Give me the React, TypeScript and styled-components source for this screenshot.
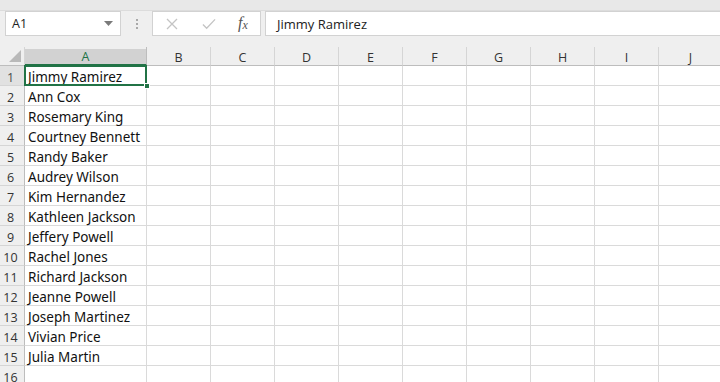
import React from 'react';
import styled, { createGlobalStyle } from 'styled-components';

const names = [
    'Jimmy Ramirez',
    'Ann Cox',
    'Rosemary King',
    'Courtney Bennett',
    'Randy Baker',
    'Audrey Wilson',
    'Kim Hernandez',
    'Kathleen Jackson',
    'Jeffery Powell',
    'Rachel Jones',
    'Richard Jackson',
    'Jeanne Powell',
    'Joseph Martinez',
    'Vivian Price',
    'Julia Martin',
    '',
    '',
];

const columns = ['A', 'B', 'C', 'D', 'E', 'F', 'G', 'H', 'I', 'J'];

const GlobalStyle = createGlobalStyle`
    *, *::before, *::after {
        box-sizing: border-box;
    }
    html, body {
        margin: 0;
        padding: 0;
        background: #ffffff;
        overflow: hidden;
    }
    body {
        font-family: 'Noto Sans', 'Open Sans', sans-serif;
    }
`;

export default function App() {
    return (
        <Page>
            <GlobalStyle />
            <FormulaBar>
                <NameBox>
                    <span>A1</span>
                    <svg width="9" height="5" viewBox="0 0 9 5">
                        <path d="M0 0 H9 L4.5 5 Z" fill="#7a7a7a" />
                    </svg>
                </NameBox>
                <Grip>
                    <i />
                    <i />
                    <i />
                </Grip>
                <ButtonBox>
                    <IconButton>
                        <svg width="12" height="12" viewBox="0 0 12 12">
                            <path d="M1 1 L11 11 M11 1 L1 11" stroke="#c4c4c4" strokeWidth="1.3" fill="none" />
                        </svg>
                    </IconButton>
                    <IconButton>
                        <svg width="15" height="12" viewBox="0 0 15 12">
                            <path d="M1 6.5 L5 10.5 L14 1" stroke="#c4c4c4" strokeWidth="1.4" fill="none" />
                        </svg>
                    </IconButton>
                    <FxLabel>
                        f<sub>x</sub>
                    </FxLabel>
                </ButtonBox>
                <FormulaInput>Jimmy Ramirez</FormulaInput>
            </FormulaBar>
            <Sheet>
                <Corner>
                    <svg width="12" height="12" viewBox="0 0 12 12">
                        <path d="M12 0 V12 H0 Z" fill="#b9b9b9" />
                    </svg>
                </Corner>
                {columns.map((c, i) => (
                    <ColHeader key={c} $active={i === 0}>
                        {c}
                    </ColHeader>
                ))}
                {names.map((name, r) => (
                    <React.Fragment key={r}>
                        <RowHeader $active={r === 0}>{r + 1}</RowHeader>
                        {columns.map((c, i) => (
                            <Cell key={c} $selected={r === 0 && i === 0}>
                                {i === 0 ? name : ''}
                            </Cell>
                        ))}
                    </React.Fragment>
                ))}
            </Sheet>
        </Page>
    );
}

const Page = styled.div`
    width: 720px;
    height: 382px;
    overflow: hidden;
    background: #ffffff;
`;

const FormulaBar = styled.div`
    display: flex;
    align-items: stretch;
    height: 47px;
    padding: 11px 0 11px 5px;
    background: #efefef;
    box-shadow: inset 0 10px 0 #e8e8e8, inset 0 11px 0 #dcdcdc;
`;

const NameBox = styled.div`
    display: flex;
    align-items: center;
    justify-content: space-between;
    width: 116px;
    padding: 0 7px 0 6px;
    background: #ffffff;
    border: 1px solid #d2d2d2;
    font-family: 'Open Sans', 'Noto Sans', sans-serif;
    font-size: 12.5px;
    color: #222;
`;

const Grip = styled.div`
    display: flex;
    flex-direction: column;
    justify-content: center;
    align-items: center;
    gap: 2px;
    width: 31px;

    i {
        display: block;
        width: 2px;
        height: 2px;
        background: #a9a9a9;
    }
`;

const ButtonBox = styled.div`
    display: flex;
    align-items: center;
    width: 109px;
    padding-left: 12px;
    background: #ffffff;
    border: 1px solid #d2d2d2;
`;

const IconButton = styled.div`
    display: flex;
    align-items: center;
    justify-content: center;
    width: 14px;
    margin-right: 23px;
`;

const FxLabel = styled.div`
    font-family: 'Liberation Serif', 'DejaVu Serif', serif;
    font-style: italic;
    font-size: 16px;
    color: #555;
    margin-left: -1px;
    margin-top: -2px;

    sub {
        font-size: 12px;
        vertical-align: 0;
        position: relative;
        top: 1px;
    }
`;

const FormulaInput = styled.div`
    flex: 1;
    display: flex;
    align-items: center;
    margin-left: 4px;
    padding-left: 11px;
    background: #ffffff;
    border: 1px solid #d2d2d2;
    border-right: 0;
    font-family: 'Open Sans', 'Noto Sans', sans-serif;
    font-size: 13px;
    color: #222;
`;

const Sheet = styled.div`
    display: grid;
    grid-template-columns: 25px 122px repeat(9, 64px);
    grid-template-rows: 19px;
    grid-auto-rows: 20px;
`;

const Corner = styled.div`
    display: flex;
    align-items: flex-end;
    justify-content: flex-end;
    padding: 0 3px 3px 0;
    background: #efefef;
    border-right: 1px solid #d5d5d5;
    border-bottom: 1px solid #bdbdbd;
`;

const ColHeader = styled.div<{ $active?: boolean }>`
    display: flex;
    align-items: center;
    justify-content: center;
    padding-top: 2px;
    background: ${({ $active }) => ($active ? '#d2d2d2' : '#efefef')};
    color: ${({ $active }) => ($active ? '#217346' : '#333')};
    border-right: 1px solid ${({ $active }) => ($active ? '#bdbdbd' : '#d5d5d5')};
    border-bottom: ${({ $active }) => ($active ? '2px solid #217346' : '1px solid #bdbdbd')};
    font-family: 'Open Sans', 'Noto Sans', sans-serif;
    font-size: 12.5px;
    box-shadow: inset 0 2px 0 #efefef;
`;

const RowHeader = styled.div<{ $active?: boolean }>`
    display: flex;
    align-items: center;
    justify-content: center;
    padding: 4px 3px 0 0;
    background: ${({ $active }) => ($active ? '#e1e1e1' : '#efefef')};
    color: ${({ $active }) => ($active ? '#4b4b4b' : '#333')};
    border-right: 1px solid #bdbdbd;
    border-bottom: 1px solid #d5d5d5;
    font-family: 'Open Sans', 'Noto Sans', sans-serif;
    font-size: 12.5px;
`;

const Cell = styled.div<{ $selected?: boolean }>`
    position: relative;
    display: flex;
    align-items: flex-end;
    padding: 0 0 0 3px;
    border-right: 1px solid #dadada;
    border-bottom: 1px solid #dadada;
    font-family: 'Noto Sans', 'Open Sans', sans-serif;
    font-size: 13.5px;
    line-height: 16px;
    color: #111;
    white-space: nowrap;

    ${({ $selected }) =>
        $selected &&
        `
        &::after {
            content: '';
            position: absolute;
            left: -1px;
            top: -1px;
            right: -1px;
            bottom: -1px;
            border: 2px solid #217346;
        }
        &::before {
            content: '';
            position: absolute;
            right: -4px;
            bottom: -4px;
            width: 6px;
            height: 6px;
            background: #217346;
            border: 1px solid #ffffff;
            z-index: 1;
        }
    `}
`;
